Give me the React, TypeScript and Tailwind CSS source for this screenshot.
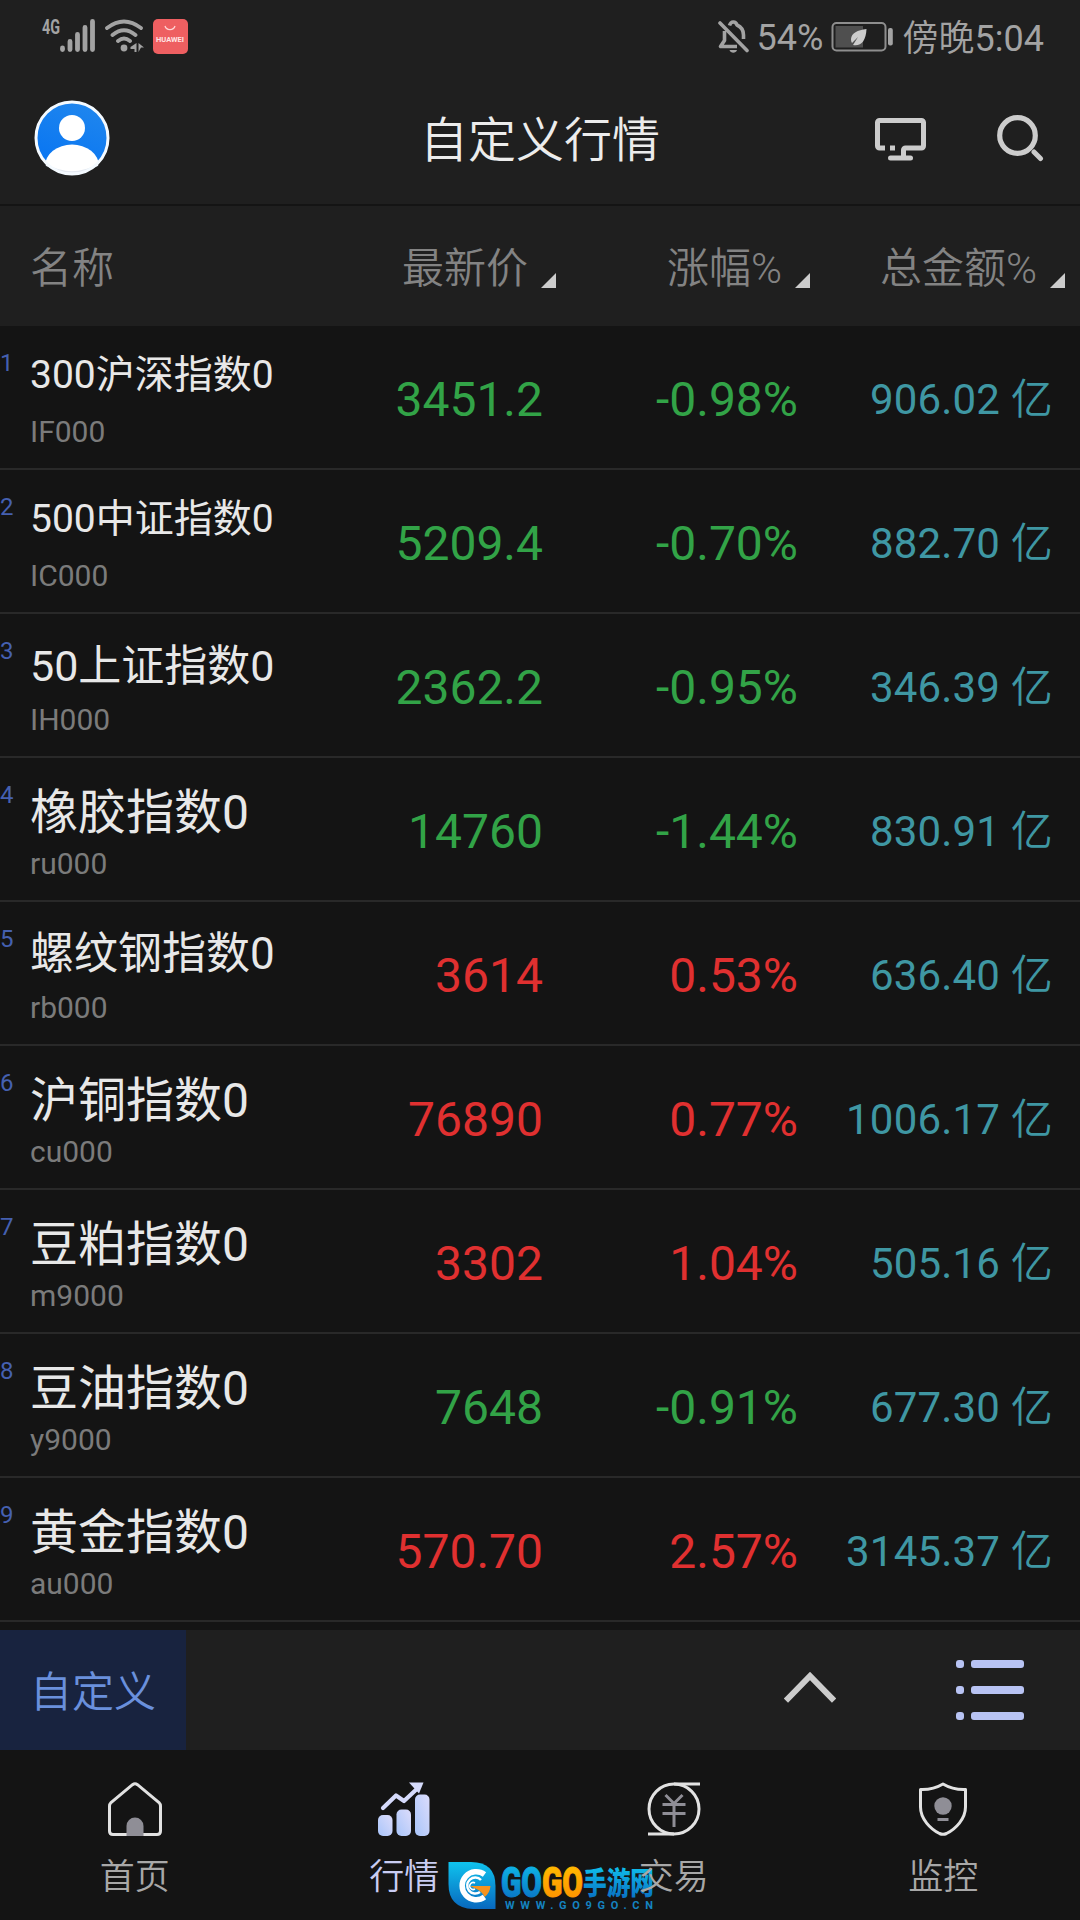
import React from 'react';
import clsx from 'clsx';

interface Quote {
    name: string;
    nameSize: string;
    code: string;
    price: string;
    change: string;
    amount: string;
    up: boolean;
}

// long names step down in size so they stay inside the first column
const quotes: Quote[] = [
    { name: '300沪深指数0', nameSize: 'text-[39px]', code: 'IF000', price: '3451.2', change: '-0.98%', amount: '906.02', up: false },
    { name: '500中证指数0', nameSize: 'text-[39px]', code: 'IC000', price: '5209.4', change: '-0.70%', amount: '882.70', up: false },
    { name: '50上证指数0', nameSize: 'text-[43px]', code: 'IH000', price: '2362.2', change: '-0.95%', amount: '346.39', up: false },
    { name: '橡胶指数0', nameSize: 'text-[48px]', code: 'ru000', price: '14760', change: '-1.44%', amount: '830.91', up: false },
    { name: '螺纹钢指数0', nameSize: 'text-[44px]', code: 'rb000', price: '3614', change: '0.53%', amount: '636.40', up: true },
    { name: '沪铜指数0', nameSize: 'text-[48px]', code: 'cu000', price: '76890', change: '0.77%', amount: '1006.17', up: true },
    { name: '豆粕指数0', nameSize: 'text-[48px]', code: 'm9000', price: '3302', change: '1.04%', amount: '505.16', up: true },
    { name: '豆油指数0', nameSize: 'text-[48px]', code: 'y9000', price: '7648', change: '-0.91%', amount: '677.30', up: false },
    { name: '黄金指数0', nameSize: 'text-[48px]', code: 'au000', price: '570.70', change: '2.57%', amount: '3145.37', up: true },
];

const SortMark = () => (
    <svg width="15" height="15" viewBox="0 0 15 15" className="mb-[3px] shrink-0">
        <path d="M15 0v15H0z" fill="#cccccc" />
    </svg>
);

function StatusBar() {
    return (
        <div className="h-[74px] flex items-center pl-[41px] pr-[36px] text-[#a3a3a3]">
            <svg width="148" height="38" viewBox="41 18 148 38">
                <text x="42" y="34" fontSize="20" fontWeight="700" fill="#a3a3a3" textLength="18" lengthAdjust="spacingAndGlyphs">4G</text>
                <g stroke="#a3a3a3" strokeWidth="4.8" strokeLinecap="round">
                    <path d="M62.5 48v1.5M70 41.500v8M77.500 34.500v15M85 27.500v22M92.500 21.500v28" />
                </g>
                <g fill="none" stroke="#a3a3a3" strokeWidth="3.8" strokeLinecap="round">
                    <path d="M107 28Q124 15 141 28M112.500 35Q124 25.500 135.500 35M118 41Q124 36 130 41" />
                </g>
                <circle cx="124" cy="48" r="3.4" fill="#a3a3a3" />
                <path d="M136.500 43v9h-2v-3h-4v-2zM138.500 43l5.500 4.500h-3l-2.500 4.500z" fill="#a3a3a3" />
                <rect x="153" y="19" width="35" height="35" rx="5" fill="#ee5f61" />
                <path d="M165 26a5.200 5 0 0 0 10 0" fill="none" stroke="#ffd4d4" strokeWidth="1.300" />
                <text x="156" y="42" fontSize="7.500" fontWeight="700" fill="#ffe4e4" textLength="28" lengthAdjust="spacingAndGlyphs">HUAWEI</text>
            </svg>
            <div className="flex-1" />
            <svg width="32" height="36" viewBox="717 19 32 36" fill="none" stroke="#a3a3a3" strokeWidth="3.600">
                <path d="M720 23l27 27.500" strokeLinecap="round" />
                <path d="M729.500 25.500c1.500-4.500 6-4.500 7.500-.5 4.500 2 6.500 6 6.500 10v4M724.500 31v9.500l-4 6H737" strokeLinejoin="round" />
                <path d="M729.500 50h7.500c-1 3.500-6.500 3.500-7.500 0z" fill="#a3a3a3" stroke="none" />
            </svg>
            <span className="ml-2 pt-[2px] w-[66px] text-[36px] whitespace-nowrap">54%</span>
            <svg width="63" height="30" viewBox="831 22 63 30" className="ml-2">
                <rect x="832.500" y="23" width="53" height="27.500" rx="4" fill="none" stroke="#8e8e8e" strokeWidth="2" />
                <rect x="835.500" y="26" width="27.500" height="21.500" fill="#4f4f4f" />
                <rect x="888" y="28" width="4.800" height="17.500" rx="2" fill="#a3a3a3" />
                <path d="M866.500 29c-9 1-15 4-15.500 10 0 2 .5 3 1 4l6-6-5 8c8 1.500 13-4 13.500-16z" fill="#cccccc" />
            </svg>
            <span className="ml-[9px] pt-[3px] text-[36px] whitespace-nowrap"><span className="font-[350]">傍晚</span>5:04</span>
        </div>
    );
}

function Header() {
    return (
        <header className="relative h-[132px] flex items-center justify-between pl-[34px] pr-[36px] pb-[2px] border-b-2 border-[#141414]">
            <svg width="76" height="76" viewBox="0 0 76 76">
                <defs>
                    <linearGradient id="avatar" x1="0.7" y1="0" x2="0.3" y2="1">
                        <stop offset="0" stopColor="#1f86ee" />
                        <stop offset="1" stopColor="#0774f2" />
                    </linearGradient>
                    <clipPath id="avatarClip"><circle cx="38" cy="38" r="36" /></clipPath>
                </defs>
                <circle cx="38" cy="38" r="36" fill="url(#avatar)" />
                <circle cx="38" cy="28" r="13" fill="#ffffff" />
                <ellipse cx="38" cy="66" rx="27" ry="21.500" fill="#ffffff" clipPath="url(#avatarClip)" />
                <path d="M12 65q26 14 52 0" fill="none" stroke="#e3e8f0" strokeWidth="1.500" />
                <circle cx="38" cy="38" r="36" fill="none" stroke="#f4faff" strokeWidth="3" />
            </svg>
            <h1 className="absolute inset-x-0 pt-[5px] text-center text-[48px] leading-[60px] font-[350] text-[#ececec]">自定义行情</h1>
            <div className="flex items-center gap-[70px]">
                <svg width="51" height="44" viewBox="0 0 51 44" className="mt-[3px]" fill="none" stroke="#cccccc" strokeWidth="5">
                    <path d="M10 30H4.500a2 2 0 0 1-2-2V4.500a2 2 0 0 1 2-2h42a2 2 0 0 1 2 2V28a2 2 0 0 1-2 2H30.500a2 2 0 0 0-2 2v7" />
                    <path d="M15 30h5" />
                    <path d="M15.500 40h20" strokeLinecap="round" />
                </svg>
                <svg width="48" height="48" viewBox="996 114 48 48" fill="none" stroke="#cccccc" strokeWidth="5.200">
                    <circle cx="1017.500" cy="135.500" r="17.800" />
                    <path d="M1034 152l6.500 6.500" strokeLinecap="round" strokeWidth="5" />
                </svg>
            </div>
        </header>
    );
}

function TableHead() {
    return (
        <div className="h-[120px] flex items-center pt-[6px] text-[42px] leading-[44px] font-[350] text-[#838383] whitespace-nowrap">
            <div className="w-[300px] pl-[30px]">名称</div>
            <div className="w-[256px] flex items-end justify-end gap-[13px]">最新价<SortMark /></div>
            <div className="w-[254px] flex items-end justify-end gap-[13px]">涨幅%<SortMark /></div>
            <div className="w-[255px] flex items-end justify-end gap-[13px]">总金额%<SortMark /></div>
        </div>
    );
}

function QuoteRow({ quote, index }: { quote: Quote; index: number }) {
    const color = quote.up ? 'text-[#e03030]' : 'text-[#32a347]';
    return (
        <div className="relative h-[144px] flex items-center border-b-2 border-[#292929] text-[48px] whitespace-nowrap">
            <span className="absolute left-0 top-[23px] text-[24px] leading-[28px] text-[#4560b0]">{index}</span>
            <div className="w-[300px] h-full pl-[30px] pt-[27px] relative">
                <div className={clsx(quote.nameSize, 'leading-[1.17] text-[#e8e8e8]')}>{quote.name}</div>
                <div className="absolute left-[30px] top-[88px] text-[30px] leading-[36px] text-[#7b7b7b]">{quote.code}</div>
            </div>
            <div className={clsx('w-[243px] pt-[6px] text-right', color)}>{quote.price}</div>
            <div className={clsx('w-[255px] pt-[6px] text-right', color)}>{quote.change}</div>
            <div className="w-[255px] pt-[5px] text-right text-[42px] tracking-[0.2px] text-[#3f97a3]">
                {quote.amount} <span className="font-[350]">亿</span>
            </div>
        </div>
    );
}

function GroupBar() {
    return (
        <div className="h-[120px] mt-2 flex items-center bg-[#1f1f1f]">
            <div className="w-[186px] h-full pt-[5px] flex items-center justify-center bg-[#18233f] text-[42px] font-[350] text-[#6a90dc]">
                自定义
            </div>
            <div className="flex-1" />
            <svg width="52" height="32" viewBox="0 0 52 32" className="mr-[119px] mb-[6px]" fill="none" stroke="#cccccc" strokeWidth="6">
                <path d="M4 27.500L26 5l22 22.500" strokeLinecap="square" />
            </svg>
            <svg width="70" height="62" viewBox="0 0 70 62" className="mr-[55px]" fill="#b8c3f3">
                {[1, 27, 53].map((y) => (
                    <g key={y}>
                        <rect x="1" y={y} width="8" height="8" rx="3" />
                        <rect x="16" y={y} width="53" height="8" rx="3" />
                    </g>
                ))}
            </svg>
        </div>
    );
}

const HomeIcon = () => (
    <svg width="54" height="54" viewBox="0 0 54 54">
        <path d="M24.500 2.700q2.500-1.800 5 0L51 20.500q1.500 1.500 1.500 3.500v25q0 3.500-3.500 3.500H5q-3.500 0-3.500-3.500V24q0-2 1.500-3.500z" fill="none" stroke="#e2e2e2" strokeWidth="3" />
        <path d="M18.500 54V44a8.500 8.500 0 0 1 17 0v10z" fill="#8f8e96" />
    </svg>
);

const ChartIcon = () => (
    <svg width="54" height="54" viewBox="0 0 54 54">
        <defs>
            <linearGradient id="bars" x1="0" y1="1" x2="1" y2="0">
                <stop offset="0" stopColor="#a9c5fa" />
                <stop offset="1" stopColor="#dcdcfb" />
            </linearGradient>
        </defs>
        <g fill="url(#bars)">
            <rect x="1" y="33" width="14.500" height="21" rx="5" />
            <rect x="19.500" y="27.500" width="14.500" height="26.500" rx="5" />
            <rect x="38" y="12.500" width="14.500" height="41.500" rx="5" />
        </g>
        <path d="M6 26l13-12.500 8 5.500L42 5" fill="none" stroke="#d5dafb" strokeWidth="4.200" strokeLinecap="round" strokeLinejoin="round" />
        <path d="M32 .5h14.500L42 11.500z" fill="#d5dafb" />
    </svg>
);

const TradeIcon = () => (
    <svg width="54" height="54" viewBox="0 0 54 54" fill="none">
        <g stroke="#e2e2e2" strokeWidth="3">
            <circle cx="27" cy="27" r="25" />
            <path d="M27 2h26M27 52H1" />
        </g>
        <path d="M18.500 13l8.500 8.500 8.500-8.500M15.500 22.500h23M15.500 31.500h23M27 21.500V45" stroke="#8f8e96" strokeWidth="3" />
    </svg>
);

const ShieldIcon = () => (
    <svg width="54" height="54" viewBox="0 0 54 54">
        <path d="M27 2q10 6 22.500 5.500V25c0 12-10 22-19 26.500q-3.500 1.500-7 0C14.500 47 4.500 37 4.500 25V7.500Q17 8 27 2z" fill="none" stroke="#e2e2e2" strokeWidth="3" strokeLinejoin="round" />
        <circle cx="27" cy="24" r="8.700" fill="#8f8e96" />
        <path d="M21.500 37.500h11" stroke="#8f8e96" strokeWidth="3" />
    </svg>
);

const tabs = [
    { label: '首页', icon: <HomeIcon />, active: false },
    { label: '行情', icon: <ChartIcon />, active: true },
    { label: '交易', icon: <TradeIcon />, active: false },
    { label: '监控', icon: <ShieldIcon />, active: false },
];

function Watermark() {
    return (
        <svg width="210" height="50" viewBox="448 1861 210 50" className="absolute left-[448px] top-[111px]">
            <defs>
                <linearGradient id="wmBlue" x1="0" y1="0" x2="0" y2="1">
                    <stop offset="0" stopColor="#0fc3ee" />
                    <stop offset="1" stopColor="#0868be" />
                </linearGradient>
                <linearGradient id="wmOrange" x1="0" y1="0" x2="0" y2="1">
                    <stop offset="0" stopColor="#ffc400" />
                    <stop offset="1" stopColor="#ff8a00" />
                </linearGradient>
            </defs>
            <path d="M448.500 1862H471q24.500 0 24.500 24v23H473q-24.500-1-24.500-25z" fill="url(#wmBlue)" />
            <path d="M484.500 1874.500a14 14 0 1 0 0 22.500" fill="none" stroke="#ffffff" strokeWidth="5.500" />
            <path d="M481 1880a8 8 0 1 0-1 12" fill="none" stroke="#ffffff" strokeWidth="2.500" />
            <path d="M475 1883a3.500 3.500 0 1 0 0 6" fill="none" stroke="#ffffff" strokeWidth="1.500" />
            <path d="M470 1886h20.500q-.5 7-6 11-2-5-7-7.500z" fill="#f7931e" />
            <g className="font-['Roboto','Noto_Sans_CJK_SC',sans-serif]" fontWeight="900">
                <text x="501" y="1897" fontSize="43" fill="url(#wmBlue)" stroke="url(#wmBlue)" strokeWidth="1" textLength="41" lengthAdjust="spacingAndGlyphs">GO</text>
                <text x="542" y="1897" fontSize="43" fill="url(#wmOrange)" stroke="url(#wmOrange)" strokeWidth="1" textLength="41" lengthAdjust="spacingAndGlyphs">GO</text>
                <text x="583" y="1894" fontSize="31" fill="url(#wmBlue)" textLength="71" lengthAdjust="spacingAndGlyphs">手游网</text>
            </g>
            <text x="505" y="1909" fontSize="11" fontWeight="700" fill="#1583c0" textLength="148" lengthAdjust="spacing">WWW.GO9GO.CN</text>
        </svg>
    );
}

function TabBar() {
    return (
        <nav className="relative h-[170px] grid grid-cols-4 pr-[2px]">
            <Watermark />
            {tabs.map((tab) => (
                <div key={tab.label} className="relative flex flex-col items-center pt-[32px]">
                    {tab.icon}
                    <span className={clsx('mt-[21px] text-[35px] leading-[42px] font-[350]', tab.active ? 'text-[#c9cdf3]' : 'text-[#a8a8a8]')}>
                        {tab.label}
                    </span>
                </div>
            ))}
        </nav>
    );
}

export default function App() {
    return (
        <div className="w-[1080px] h-[1920px] overflow-hidden bg-[#141414] font-['Roboto','Noto_Sans_CJK_SC',sans-serif] font-normal">
            <div className="bg-[#1f1f1f]">
                <StatusBar />
                <Header />
                <TableHead />
            </div>
            {quotes.map((quote, i) => (
                <QuoteRow key={quote.code} quote={quote} index={i + 1} />
            ))}
            <GroupBar />
            <TabBar />
        </div>
    );
}
